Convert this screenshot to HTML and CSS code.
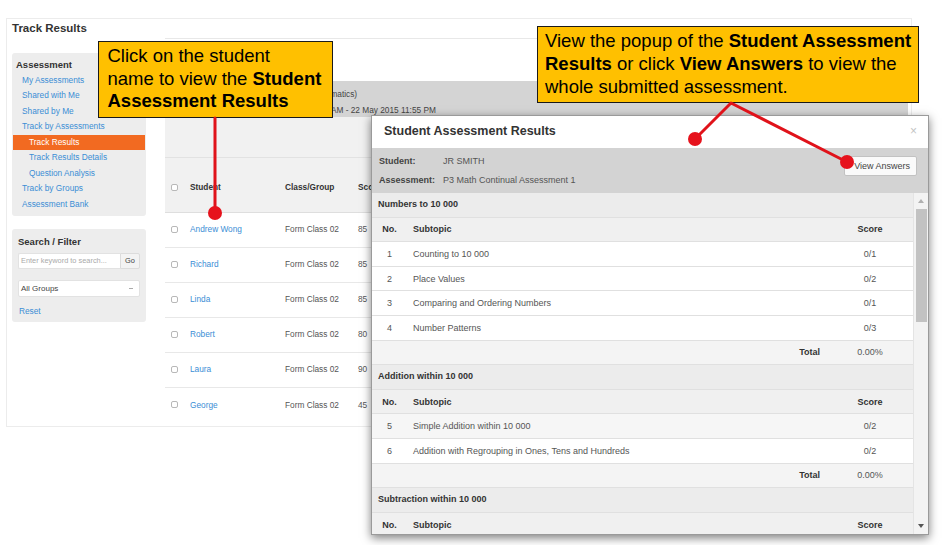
FILE: index.html
```html
<!DOCTYPE html>
<html>
<head>
<meta charset="utf-8">
<title>Track Results</title>
<link rel="stylesheet" href="styles.css">
</head>
<body>
<div class="page">
  <div class="app">
    <div class="app-title">Track Results</div>
    <div class="app-body">
      <aside class="sidebar">
        <div class="panel nav">
          <div class="panel-title">Assessment</div>
          <a class="nav-item first">My Assessments</a>
          <a class="nav-item">Shared with Me</a>
          <a class="nav-item">Shared by Me</a>
          <a class="nav-item">Track by Assessments</a>
          <a class="nav-item sub active">Track Results</a>
          <a class="nav-item sub">Track Results Details</a>
          <a class="nav-item sub">Question Analysis</a>
          <a class="nav-item">Track by Groups</a>
          <a class="nav-item">Assessment Bank</a>
        </div>
        <div class="panel search">
          <div class="panel-title">Search / Filter</div>
          <div class="search-row">
            <span class="search-input">Enter keyword to search...</span>
            <span class="go">Go</span>
          </div>
          <div class="select"><span>All Groups</span><span class="caret"></span></div>
          <a class="reset">Reset</a>
        </div>
      </aside>
      <section class="main">
        <div class="info-bar">
          <div class="info-line"><span class="info-label">Assessment:</span><span>P3 Math CA (Mathematics)</span></div>
          <div class="info-line"><span class="info-label">Period:</span><span>15 May 2015 12:00 AM - 22 May 2015 11:55 PM</span></div>
        </div>
        <div class="filter-strip"></div>
        <div class="grid-row thead">
          <span class="cb"></span><span>Student</span><span>Class/Group</span><span>Score</span>
        </div>
        <div class="grid-row"><span class="cb"></span><a class="name">Andrew Wong</a><span>Form Class 02</span><span>85</span></div>
        <div class="grid-row"><span class="cb"></span><a class="name">Richard</a><span>Form Class 02</span><span>85</span></div>
        <div class="grid-row"><span class="cb"></span><a class="name">Linda</a><span>Form Class 02</span><span>85</span></div>
        <div class="grid-row"><span class="cb"></span><a class="name">Robert</a><span>Form Class 02</span><span>80</span></div>
        <div class="grid-row"><span class="cb"></span><a class="name">Laura</a><span>Form Class 02</span><span>90</span></div>
        <div class="grid-row last"><span class="cb"></span><a class="name">George</a><span>Form Class 02</span><span>45</span></div>
      </section>
    </div>
  </div>

  <div class="popup">
    <div class="popup-header">
      <span class="popup-title">Student Assessment Results</span>
      <span class="close">&times;</span>
    </div>
    <div class="popup-info">
      <div class="info-fields">
        <div class="field"><span class="field-label">Student:</span><span>JR SMITH</span></div>
        <div class="field"><span class="field-label">Assessment:</span><span>P3 Math Continual Assessment 1</span></div>
      </div>
      <span class="btn">View Answers</span>
    </div>
    <div class="popup-body">
      <div class="results">
        <div class="r-section">Numbers to 10 000</div>
        <div class="r-row r-head"><span>No.</span><span>Subtopic</span><span>Score</span></div>
        <div class="r-row"><span>1</span><span>Counting to 10 000</span><span>0/1</span></div>
        <div class="r-row"><span>2</span><span>Place Values</span><span>0/2</span></div>
        <div class="r-row"><span>3</span><span>Comparing and Ordering Numbers</span><span>0/1</span></div>
        <div class="r-row"><span>4</span><span>Number Patterns</span><span>0/3</span></div>
        <div class="r-row r-total"><span></span><span class="total-label">Total</span><span>0.00%</span></div>
        <div class="r-section">Addition within 10 000</div>
        <div class="r-row r-head"><span>No.</span><span>Subtopic</span><span>Score</span></div>
        <div class="r-row r-hover"><span>5</span><span>Simple Addition within 10 000</span><span>0/2</span></div>
        <div class="r-row"><span>6</span><span>Addition with Regrouping in Ones, Tens and Hundreds</span><span>0/2</span></div>
        <div class="r-row r-total"><span></span><span class="total-label">Total</span><span>0.00%</span></div>
        <div class="r-section">Subtraction within 10 000</div>
        <div class="r-row r-head"><span>No.</span><span>Subtopic</span><span>Score</span></div>
      </div>
      <div class="scrollbar">
        <span class="arrow up"></span>
        <span class="thumb"></span>
        <span class="arrow down"></span>
      </div>
    </div>
  </div>

  <div class="callout callout-left">Click on the student<br>name to view the <b>Student</b><br><b>Assessment Results</b></div>
  <div class="callout callout-right">View the popup of the <b>Student Assessment</b><br><b>Results</b> or click <b>View Answers</b> to view the<br>whole submitted assessment.</div>

  <svg class="pointers" width="943" height="545" viewBox="0 0 943 545">
    <g stroke="#e0121a" stroke-width="3" fill="none" stroke-linecap="round" stroke-linejoin="round">
      <line x1="215" y1="118" x2="215" y2="213"/>
      <polyline points="695,139 731,103 847,162"/>
    </g>
    <g fill="#e6121c">
      <circle cx="215" cy="213" r="7"/>
      <circle cx="695" cy="139" r="7"/>
      <circle cx="847" cy="162" r="7"/>
    </g>
  </svg>
</div>
</body>
</html>
```

FILE: styles.css
```css
* { box-sizing: border-box; }
html, body { margin: 0; padding: 0; background: #fff; }
body {
  font-family: "Liberation Sans", Arial, Helvetica, sans-serif;
  color: #555;
  width: 943px;
  height: 545px;
  overflow: hidden;
}
a { text-decoration: none; cursor: pointer; }

.page {
  position: relative;
  width: 943px;
  height: 545px;
  padding: 18px 0 0 6px;
}

/* ---------- app ---------- */
.app {
  width: 906px;
  height: 409px;
  border: 1px solid #ececec;
}
.app-title {
  height: 19px;
  line-height: 19px;
  padding-left: 5px;
  font-size: 11.5px;
  font-weight: bold;
  color: #333;
}
.app-body {
  display: flex;
  padding-left: 5px;
}

/* sidebar */
.sidebar {
  width: 134px;
  flex: none;
  padding-top: 15px;
}
.panel {
  background: #ededed;
  border-radius: 3px;
}
.nav {
  display: flex;
  flex-direction: column;
  padding: 3.5px 0 3.5px;
}
.panel-title {
  font-size: 9.5px;
  font-weight: bold;
  color: #333;
  line-height: 15px;
  padding-left: 4px;
}
.nav-item {
  font-size: 8.3px;
  line-height: 15.5px;
  height: 15.5px;
  color: #3b8ed5;
  padding-left: 10px;
}
.nav-item.first { margin-top: 1px; }
.nav-item.sub { padding-left: 17px; }
.nav-item.active {
  background: #f26a21;
  color: #fff;
  margin: 0 1px;
  padding-left: 16px;
}

.search {
  margin-top: 13px;
  padding: 6px 6px 4px;
}
.search .panel-title {
  padding-left: 0;
  line-height: 14px;
}
.search-row {
  display: flex;
  margin-top: 4px;
  height: 16px;
}
.search-input {
  flex: 1;
  background: #fff;
  border: 1px solid #e2e2e2;
  border-right: none;
  font-size: 7.4px;
  color: #aaa;
  line-height: 14px;
  padding-left: 2px;
  white-space: nowrap;
  overflow: hidden;
  border-radius: 2px 0 0 2px;
}
.go {
  width: 20px;
  flex: none;
  background: #f3f3f3;
  border: 1px solid #dcdcdc;
  font-size: 7.4px;
  color: #444;
  text-align: center;
  line-height: 14px;
  border-radius: 0 2px 2px 0;
}
.select {
  margin-top: 11px;
  height: 17px;
  background: #fff;
  border: 1px solid #e2e2e2;
  border-radius: 2px;
  display: flex;
  align-items: center;
  justify-content: space-between;
  padding: 0 6px 0 2px;
  font-size: 8px;
  color: #444;
}
.caret {
  width: 4px;
  height: 1px;
  background: #aaa;
}
.reset {
  display: block;
  margin-top: 7px;
  font-size: 8.3px;
  line-height: 14px;
  color: #3b8ed5;
  padding-left: 1px;
}

/* main */
.main {
  margin-left: 19px;
  width: 743px;
  border-top: 1px solid #e8e8e8;
  padding-top: 42px;
}
.info-bar {
  height: 36px;
  background: #d4d4d4;
  padding: 5px 0 0 10px;
  overflow: hidden;
  font-size: 8.3px;
  color: #444;
}
.info-line {
  display: flex;
  line-height: 16px;
  white-space: nowrap;
}
.info-label {
  width: 83px;
  flex: none;
  font-weight: bold;
  color: #333;
}
.filter-strip {
  height: 41px;
  background: #f1f1f1;
  border-bottom: 1px solid #e2e2e2;
}
.grid-row {
  display: grid;
  grid-template-columns: 25px 95px 73px 1fr;
  align-items: center;
  height: 35px;
  border-bottom: 1px solid #e8e8e8;
  font-size: 8.3px;
  color: #555;
  padding-bottom: 2px;
}
.grid-row.last { border-bottom: none; }
.thead {
  height: 55px;
  background: #f1f1f1;
  border-bottom: 1px solid #dedede;
  font-weight: bold;
  color: #333;
  padding: 4px 0 0;
}
.cb {
  width: 7px;
  height: 7px;
  margin-left: 6px;
  border: 1px solid #b8b8b8;
  border-radius: 2px;
  background: #fff;
}
.name { color: #3b8ed5; }

/* ---------- popup ---------- */
.popup {
  position: absolute;
  left: 371px;
  top: 115px;
  width: 558px;
  height: 420px;
  background: #fff;
  border: 1px solid #9a9a9a;
  box-shadow: 0 3px 9px rgba(0, 0, 0, 0.5);
  display: flex;
  flex-direction: column;
  overflow: hidden;
}
.popup-header {
  height: 32px;
  flex: none;
  display: flex;
  align-items: center;
  justify-content: space-between;
  padding: 0 11px 2px 12px;
}
.popup-title {
  font-size: 12.5px;
  font-weight: bold;
  color: #333;
}
.close {
  font-size: 12px;
  color: #c4c4c4;
}
.popup-info {
  height: 45px;
  flex: none;
  background: #d3d3d3;
  display: flex;
  justify-content: space-between;
  align-items: flex-start;
  padding: 4px 11px 0 7px;
}
.field {
  display: flex;
  line-height: 19px;
  font-size: 9px;
  color: #555;
}
.field-label {
  width: 64px;
  flex: none;
  font-weight: bold;
  color: #444;
}
.btn {
  margin-top: 4px;
  height: 20px;
  width: 73px;
  background: #fafafa;
  border: 1px solid #c2c2c2;
  border-radius: 2px;
  font-size: 9px;
  color: #444;
  text-align: right;
  padding-right: 6px;
  line-height: 18px;
}
.popup-body {
  flex: 1;
  display: flex;
  min-height: 0;
}
.results {
  flex: 1;
  overflow: hidden;
}
.r-section {
  height: 24.6px;
  line-height: 23.6px;
  background: #ececec;
  border-bottom: 1px solid #e0e0e0;
  padding-left: 6px;
  font-size: 9px;
  font-weight: bold;
  color: #333;
}
.r-row {
  display: grid;
  grid-template-columns: 35px 1fr 86px;
  align-items: center;
  height: 24.6px;
  border-bottom: 1px solid #e0e0e0;
  font-size: 9px;
  color: #555;
  background: #fff;
}
.r-row span:first-child,
.r-row span:last-child { text-align: center; }
.r-row span:nth-child(2) { padding-left: 6px; }
.r-head {
  background: #f0f0f0;
  font-weight: bold;
  color: #333;
}
.r-hover { background: #f6f6f6; }
.r-total { background: #f4f4f4; }
.r-total .total-label {
  text-align: right;
  padding-right: 7px;
  font-weight: bold;
  color: #333;
}
.scrollbar {
  width: 15px;
  flex: none;
  background: #f3f3f3;
  border-left: 1px solid #e4e4e4;
  display: flex;
  flex-direction: column;
  align-items: center;
  padding: 6px 0 6px;
}
.arrow {
  width: 0;
  height: 0;
  border-left: 3px solid transparent;
  border-right: 3px solid transparent;
}
.arrow.up { border-bottom: 4px solid #b0b0b0; }
.arrow.down { border-top: 4px solid #555; margin-top: auto; }
.thumb {
  width: 11px;
  height: 113px;
  margin-top: 6px;
  background: #c2c2c2;
}

/* ---------- annotations ---------- */
.callout {
  position: absolute;
  background: #ffc000;
  border: 1.5px solid #1a1a1a;
  color: #000;
  font-size: 18.5px;
  line-height: 22.5px;
  white-space: nowrap;
}
.callout b { font-weight: bold; }
.callout-left {
  left: 98px;
  top: 41px;
  width: 235px;
  height: 77px;
  padding: 3px 0 0 8.5px;
}
.callout-right {
  left: 537px;
  top: 26px;
  width: 382px;
  height: 77px;
  padding: 2px 0 0 7px;
  line-height: 23px;
}
.pointers {
  position: absolute;
  left: 0;
  top: 0;
  pointer-events: none;
}
```
